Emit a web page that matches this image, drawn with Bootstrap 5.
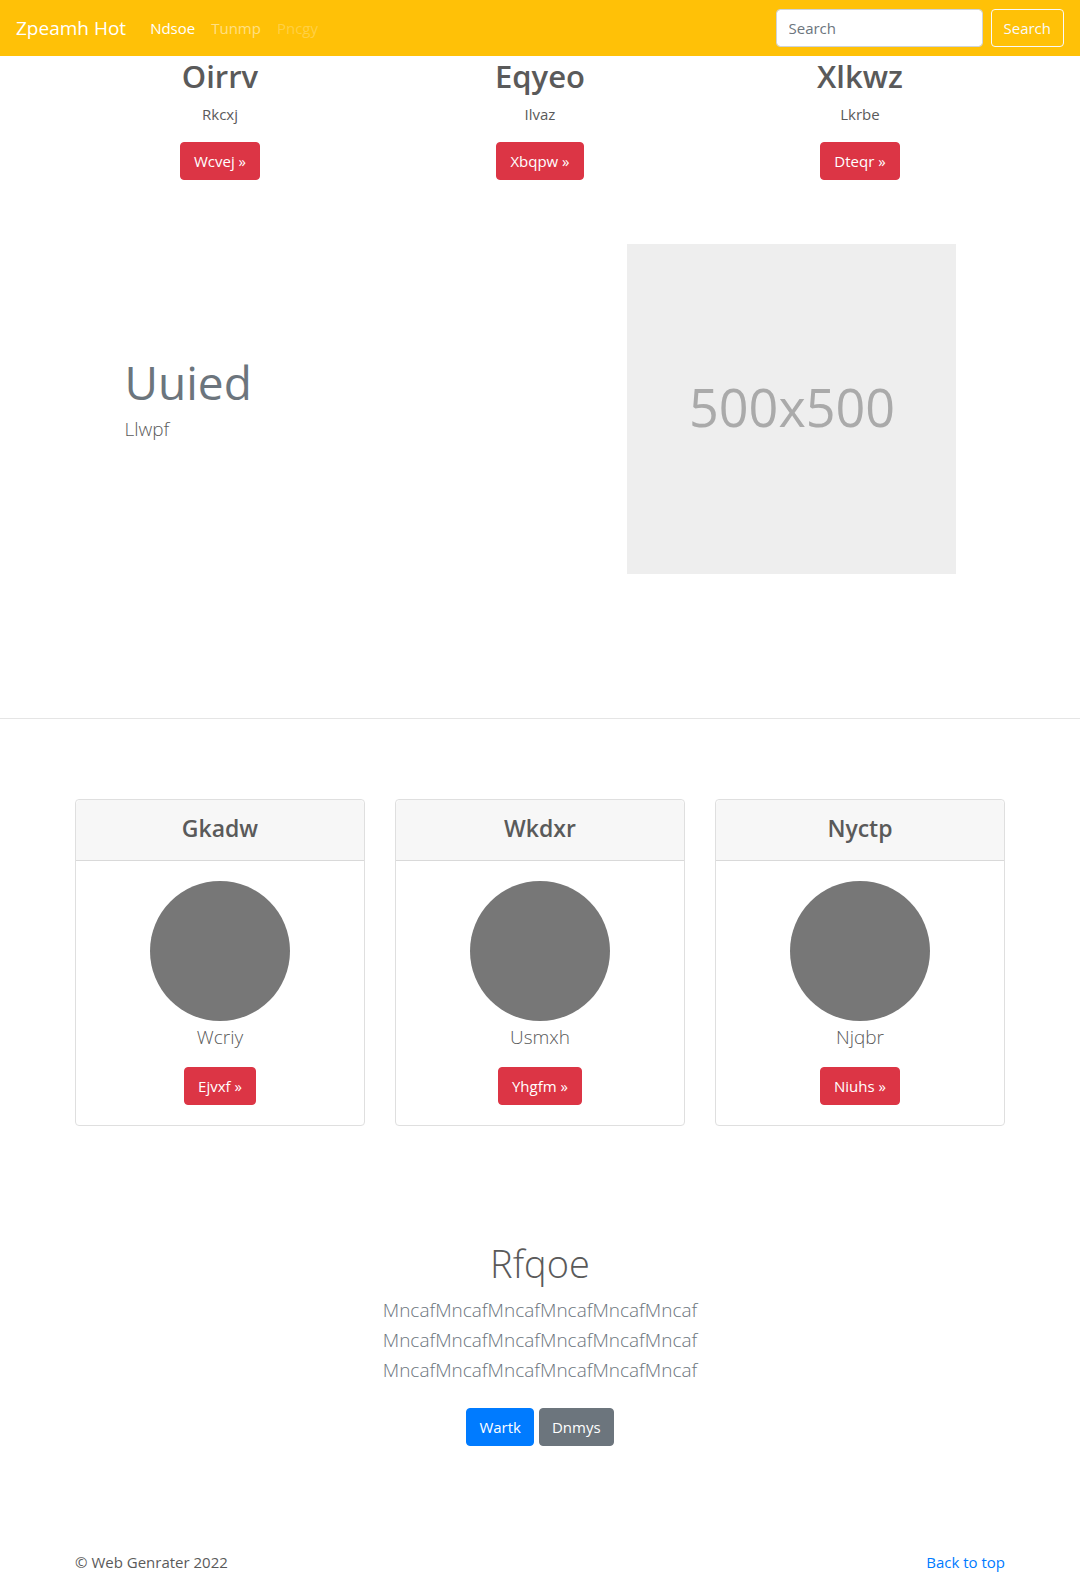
<!DOCTYPE html>
<html lang="en">
<head>
<meta charset="utf-8">
<meta name="viewport" content="width=device-width, initial-scale=1">
<title>Zpeamh Hot</title>
<link href="https://cdn.jsdelivr.net/npm/bootstrap@5.3.0/dist/css/bootstrap.min.css" rel="stylesheet">
<script src="https://cdn.jsdelivr.net/npm/bootstrap@5.3.0/dist/js/bootstrap.bundle.min.js" defer></script>
<style>
  body { font-family: "Segoe UI", "Open Sans", "Noto Sans", sans-serif; font-size: 15px; line-height: 24px; color: #5a5a5a; }
  .container, .feature-row, .row { --bs-gutter-x: 30px; }
  p { margin-bottom: 16px; }
  .btn { font-size: 15px; line-height: 24px; border-radius: 4px; --bs-btn-padding-x: 12px; }
  .btn-danger { --bs-btn-padding-x: 13px; }
  .btn-primary { --bs-btn-bg: #007bff; --bs-btn-border-color: #007bff; }
  .top-bar { background: #ffc107; min-height: 56px; padding: 8px 16px; --bs-navbar-nav-link-padding-x: 8px; }
  .top-bar .navbar-brand { font-size: 19px; line-height: 30px; margin-right: 16px; }
  .top-bar .nav-link { color: rgba(255,255,255,.5); }
  .top-bar .nav-link.active { color: #fff; }
  .top-bar .nav-link.disabled { color: rgba(255,255,255,.25); }
  .top-bar .form-control { width: 207px; font-size: 15px; line-height: 24px; border-color: #ced4da; border-radius: 4px; }
  .top-bar .form-control::placeholder { color: #6c757d; }
  .intro h2 { font-size: 31px; line-height: 40px; font-weight: 600; margin-bottom: 6px; }
  .feature-row { max-width: 861px; margin: 48px auto 144px; }
  .feature-row h2 { font-size: 46px; line-height: 54px; font-weight: 400; color: #6c757d; margin-bottom: 4px; }
  .feature-row .soft-lead { margin-bottom: 20px; }
  .feature-row svg { height: 330px; }
  .soft-lead { font-size: 19px; line-height: 30px; font-weight: 300; padding-top: 1px; margin-bottom: 15px; }
  .page-rule { margin: 0 0 80px; border-top: 1px solid rgba(0,0,0,.1); opacity: 1; }
  .tile { border: 1px solid #dfdfdf; border-radius: 4px; }
  .tile .card-header { background: #f7f7f7; border-color: #d9d9d9; padding: 12px 20px; }
  .tile h4 { font-size: 23px; line-height: 32px; font-weight: 600; margin-bottom: 4px; }
  .tile .card-body { padding: 20px; }
  .tile .dot { display: block; width: 140px; height: 140px; margin: 0 auto; }
  .closing { padding: 112px 0 104px; }
  .closing h1 { font-size: 38px; line-height: 50px; font-weight: 300; margin-bottom: 6px; }
  .closing .soft-lead { color: #6c757d; margin-bottom: 23px; }
  .closing .actions { gap: 5px; }
  footer a { color: #007bff; }
</style>
</head>
<body>
<nav class="navbar navbar-expand-md navbar-dark top-bar" id="top">
  <a class="navbar-brand" href="#">Zpeamh Hot</a>
  <ul class="navbar-nav me-auto">
    <li class="nav-item"><a class="nav-link active" aria-current="page" href="#">Ndsoe</a></li>
    <li class="nav-item"><a class="nav-link" href="#">Tunmp</a></li>
    <li class="nav-item"><a class="nav-link disabled" href="#" aria-disabled="true">Pncgy</a></li>
  </ul>
  <form class="d-flex gap-2">
    <input class="form-control" type="search" placeholder="Search" aria-label="Search">
    <button class="btn btn-outline-light" type="submit">Search</button>
  </form>
</nav>

<main>
  <section class="container intro">
    <div class="row text-center">
      <div class="col-md-4"><h2>Oirrv</h2><p>Rkcxj</p><p><a class="btn btn-danger" href="#">Wcvej »</a></p></div>
      <div class="col-md-4"><h2>Eqyeo</h2><p>Ilvaz</p><p><a class="btn btn-danger" href="#">Xbqpw »</a></p></div>
      <div class="col-md-4"><h2>Xlkwz</h2><p>Lkrbe</p><p><a class="btn btn-danger" href="#">Dteqr »</a></p></div>
    </div>
  </section>

  <section class="row feature-row align-items-center">
    <div class="col-md-7">
      <h2>Uuied</h2>
      <p class="soft-lead">Llwpf</p>
    </div>
    <div class="col-md-5">
      <svg class="d-block w-100" viewBox="0 0 500 500" preserveAspectRatio="xMidYMid slice" role="img" aria-label="500x500">
        <rect width="500" height="500" fill="#eee"/>
        <text x="251" y="277" font-size="79" text-anchor="middle" fill="#aaa">500x500</text>
      </svg>
    </div>
  </section>

  <hr class="page-rule">

  <section class="container">
    <div class="row text-center">
      <div class="col-md-4">
        <div class="card tile">
          <div class="card-header"><h4>Gkadw</h4></div>
          <div class="card-body">
            <svg class="dot" viewBox="0 0 140 140" aria-hidden="true"><circle cx="70" cy="70" r="70" fill="#777"/></svg>
            <p class="soft-lead">Wcriy</p>
            <a class="btn btn-danger" href="#">Ejvxf »</a>
          </div>
        </div>
      </div>
      <div class="col-md-4">
        <div class="card tile">
          <div class="card-header"><h4>Wkdxr</h4></div>
          <div class="card-body">
            <svg class="dot" viewBox="0 0 140 140" aria-hidden="true"><circle cx="70" cy="70" r="70" fill="#777"/></svg>
            <p class="soft-lead">Usmxh</p>
            <a class="btn btn-danger" href="#">Yhgfm »</a>
          </div>
        </div>
      </div>
      <div class="col-md-4">
        <div class="card tile">
          <div class="card-header"><h4>Nyctp</h4></div>
          <div class="card-body">
            <svg class="dot" viewBox="0 0 140 140" aria-hidden="true"><circle cx="70" cy="70" r="70" fill="#777"/></svg>
            <p class="soft-lead">Njqbr</p>
            <a class="btn btn-danger" href="#">Niuhs »</a>
          </div>
        </div>
      </div>
    </div>
  </section>

  <section class="container closing text-center">
    <h1>Rfqoe</h1>
    <p class="soft-lead">MncafMncafMncafMncafMncafMncaf<br>MncafMncafMncafMncafMncafMncaf<br>MncafMncafMncafMncafMncafMncaf</p>
    <div class="actions d-flex justify-content-center">
      <a class="btn btn-primary" href="#">Wartk</a>
      <a class="btn btn-secondary" href="#">Dnmys</a>
    </div>
  </section>
</main>

<footer class="container d-flex justify-content-between">
  <span>© Web Genrater 2022</span>
  <a class="text-decoration-none" href="#top">Back to top</a>
</footer>
</body>
</html>
